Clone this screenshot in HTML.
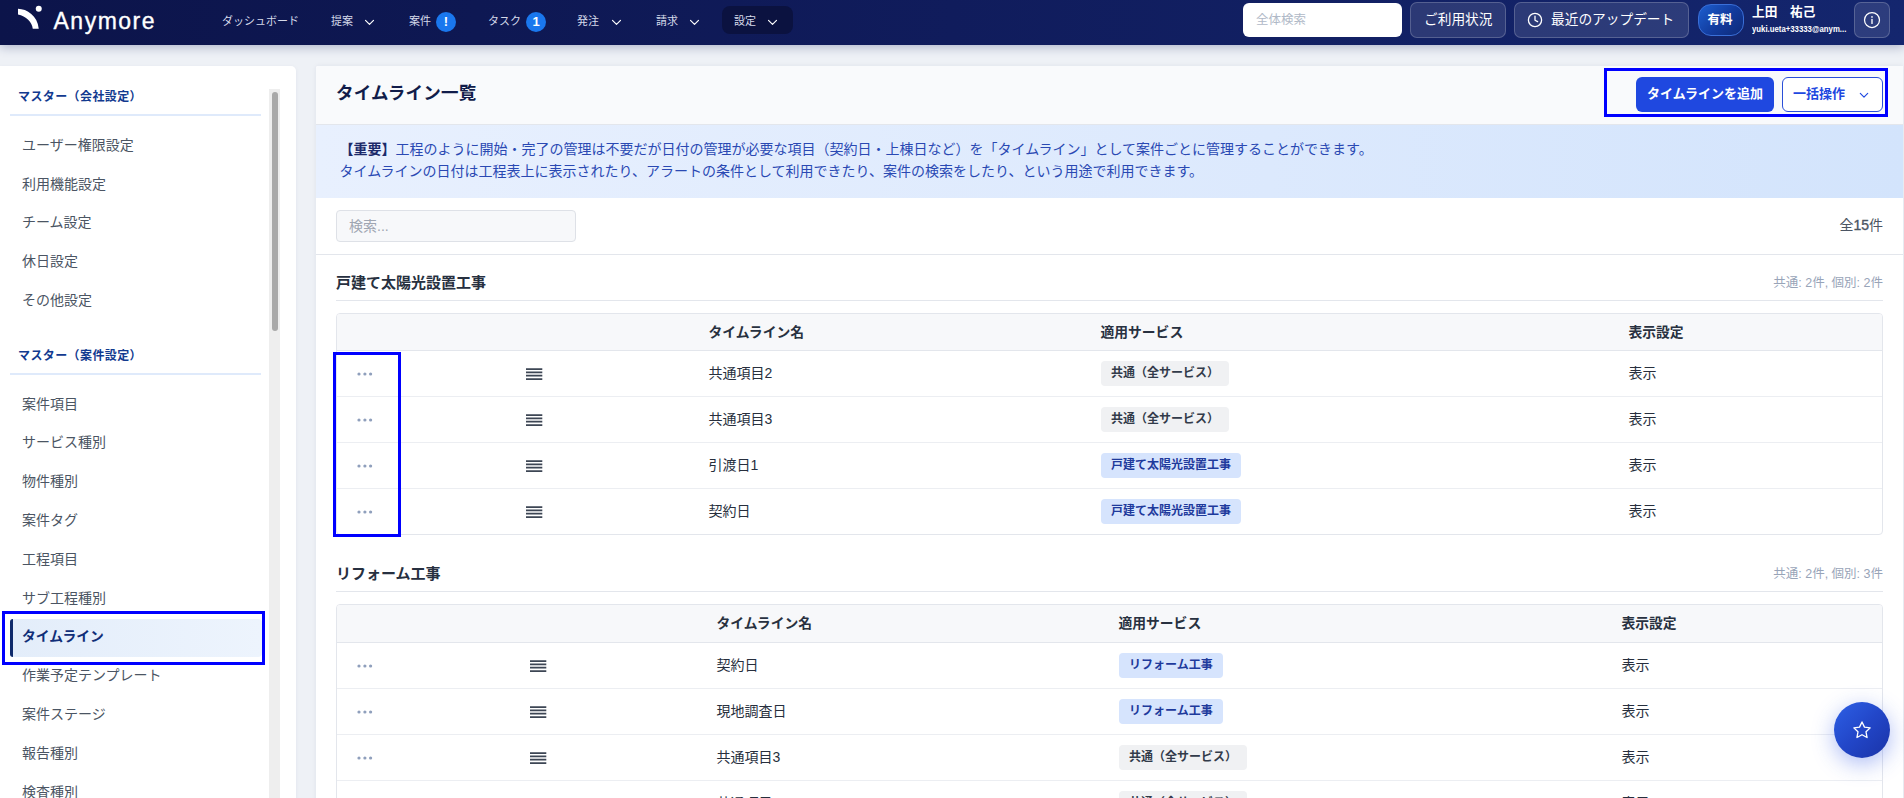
<!DOCTYPE html>
<html lang="ja">
<head>
<meta charset="utf-8">
<title>タイムライン一覧</title>
<style>
*{box-sizing:border-box;margin:0;padding:0}
html,body{width:1904px;height:798px;overflow:hidden}
body{font-family:"Liberation Sans","Noto Sans CJK JP",sans-serif;background:#eef1f6;color:#1f2937;position:relative;font-size:14px}
.abs{position:absolute}
/* ---------- header ---------- */
#hdr{position:absolute;left:0;top:0;width:1904px;height:45px;background:linear-gradient(90deg,#0c144a 0%,#101c5c 50%,#14266e 100%);box-shadow:0 2px 10px rgba(20,36,100,.3);z-index:5}
#hdr .logo{position:absolute;left:16px;top:4px}
#hdr .brand{position:absolute;left:53.5px;top:6px;font-size:23px;line-height:30px;color:#fff;letter-spacing:1.5px;-webkit-text-stroke:.35px #fff;font-family:"Liberation Sans",sans-serif}
.nav{position:absolute;top:0;height:43px;line-height:43px;font-size:11px;color:#d5daea;white-space:nowrap}
.nav svg{position:absolute;top:18.5px}
.badge{position:absolute;top:12px;width:20px;height:20px;border-radius:50%;background:#1a77ee;color:#fff;font-weight:bold;font-size:13px;line-height:20px;text-align:center}
.pill{position:absolute;left:722px;top:6px;width:71px;height:28px;border-radius:8px;background:#0b1240}
.hbtn{position:absolute;top:2px;height:36px;border-radius:7px;background:rgba(255,255,255,.11);border:1px solid rgba(255,255,255,.2);color:#fff;font-size:13.7px;line-height:34px;white-space:nowrap}
#gsearch{position:absolute;left:1243px;top:3px;width:159px;height:34px;border-radius:6px;background:#fff;color:#b0b9c7;font-size:12.5px;line-height:34px;padding-left:13px}
.paid{position:absolute;left:1698px;top:4px;width:46px;height:32px;border-radius:13px;padding-right:2px;background:linear-gradient(135deg,#1d5fd0 0%,#123a9c 55%,#0e2a78 100%);border:1px solid #3a6fd8;color:#fff;font-weight:bold;font-size:12.5px;line-height:30px;text-align:center}
.uname{position:absolute;left:1752px;top:3px;font-size:12.7px;font-weight:bold;color:#fff;line-height:18px;white-space:nowrap}
.umail{position:absolute;left:1752px;top:23px;font-size:9px;font-weight:bold;color:#fff;line-height:12px;white-space:nowrap;transform-origin:left center;transform:scaleX(.865)}
/* ---------- sidebar ---------- */
#side{position:absolute;left:0;top:66px;width:296px;height:740px;background:#fff;border-top-right-radius:5px;box-shadow:0 1px 4px rgba(30,40,90,.06)}
.shead{position:absolute;left:18px;font-size:12px;font-weight:bold;color:#123a8f;line-height:16px;white-space:nowrap;letter-spacing:.4px}
.sline{position:absolute;left:10px;width:251px;height:2px;background:#dfeafb}
.sitem{position:absolute;left:22px;font-size:14px;color:#4b5563;line-height:20px;white-space:nowrap}
.strack{position:absolute;left:269px;top:22px;width:11px;height:720px;background:#eeeeee}
.sthumb{position:absolute;left:272px;top:25px;width:6px;height:239px;border-radius:3px;background:#a9a9a9}
.sact{position:absolute;left:10px;top:552px;width:252px;height:38px;border-radius:4px;background:linear-gradient(90deg,#e3edfa,#edf4fd)}
.sact i{position:absolute;left:0;top:0;width:3px;height:38px;border-radius:3px 0 0 3px;background:#0f2a6b}
.sact b{position:absolute;left:12px;top:7.6px;font-size:13.8px;line-height:20px;color:#102e78}
.hl{position:absolute;border:3px solid #0000ff;z-index:4}
/* ---------- main ---------- */
#main{position:absolute;left:316px;top:66px;width:1587px;height:740px;background:#fff;border-top-left-radius:2px;box-shadow:0 0 5px rgba(30,40,90,.07)}
#mhead{position:absolute;left:0;top:0;width:1587px;height:59px;background:#f9fafc;border-bottom:1px solid #e3e6ec;border-top-left-radius:2px}
#mhead h1{position:absolute;left:20px;top:14.4px;font-size:17.5px;line-height:26px;font-weight:bold;color:#111c4a;letter-spacing:.2px}
.btnp{position:absolute;left:1320px;top:11px;width:138px;height:35px;border-radius:6px;background:#1f48e0;color:#fff;font-weight:bold;font-size:13px;line-height:34px;text-align:center}
.btno{position:absolute;left:1466px;top:11px;width:101px;height:35px;border-radius:6px;background:#fff;border:1px solid #2a4fd8;color:#1f48e0;font-weight:bold;font-size:13px;line-height:32px;padding-left:10px}
#banner{position:absolute;left:0;top:59px;width:1587px;height:73px;background:linear-gradient(90deg,#e8f0fe 0%,#dce9fd 60%,#d3e4fc 100%);color:#2a49b3;font-size:14px;line-height:22px;padding:13px 0 0 23.5px;white-space:nowrap}
#banner b{color:#1c2a6a}
#sbar{position:absolute;left:0;top:131px;width:1587px;height:58px;border-bottom:1px solid #e3e6ec}
#sbar .inp{position:absolute;left:20px;top:13px;width:240px;height:32px;border-radius:4px;border:1px solid #dee1e7;background:#f7f8fa;color:#9fa6b2;font-size:14px;line-height:30px;padding-left:12px}
#sbar .cnt{position:absolute;right:20px;top:18px;font-size:14px;line-height:20px;color:#4b5563}
.sec{position:absolute;left:20px;width:1547px}
.sec h2{position:absolute;left:0;top:0;font-size:15px;line-height:22px;font-weight:bold;color:#273040}
.sec .meta{position:absolute;right:0;top:2px;font-size:12.5px;line-height:18px;color:#98a4b8}
.sec .ul{position:absolute;left:0;top:28px;width:1547px;height:1px;background:#e3e6ec}
.tbl{position:absolute;left:0;top:41px;width:1547px;border:1px solid #e3e6ec;border-radius:4px;background:#fff;overflow:hidden}
.th{position:relative;height:37px;background:#f7f8fa;border-bottom:1px solid #e3e6ec;font-weight:bold;font-size:14px;color:#283140}
.th2{height:38px}
.th2 span{line-height:38px}
.tr{position:relative;height:46px;border-bottom:1px solid #eceef2;font-size:14px;color:#272f3d}
.tr:last-child{border-bottom:none;height:45px}
.th span,.tr span{position:absolute;top:0;white-space:nowrap;margin-left:-.6px}
.th span{line-height:37px;font-size:13.8px}
.tr span{line-height:45px}
.dots{position:absolute;left:20px;top:20px;fill:#8f9fbc}
.ham{position:absolute;top:17px}
.tag{position:absolute;top:10px;height:25px;border-radius:4px;font-size:12px;font-weight:bold;line-height:25px;padding:0 10px;white-space:nowrap}
.tg{background:#f0f1f3;color:#323b4a}
.tb{background:#d6e4fd;color:#1e3a9c}
#fab{position:absolute;left:1834px;top:702px;width:56px;height:56px;border-radius:50%;background:linear-gradient(135deg,#2d60e6 0%,#2246c8 50%,#1a33a6 100%);box-shadow:0 6px 22px rgba(40,80,230,.38);z-index:6}
</style>
</head>
<body>
<!-- HEADER -->
<div id="hdr">
  <svg class="logo" width="32" height="30" viewBox="0 0 32 30"><path d="M2 4.75 C 11 5, 21.5 11.5, 22.75 24.75 L 16.75 24.75 C 16.2 18, 10 12, 2 10.4 Z" fill="#fff"/><circle cx="22.75" cy="4.75" r="3" fill="#fff"/></svg>
  <div class="brand">Anymore</div>
  <div class="nav" style="left:222px">ダッシュボード</div>
  <div class="nav" style="left:331px">提案<svg style="left:33px" width="11" height="7" viewBox="0 0 11 7"><path d="M1.5 1.3 L5.5 5.3 L9.5 1.3" fill="none" stroke="#fff" stroke-width="1.15" stroke-linecap="round" stroke-linejoin="round"/></svg></div>
  <div class="nav" style="left:409px">案件</div><div class="badge" style="left:436px">!</div>
  <div class="nav" style="left:488px">タスク</div><div class="badge" style="left:526px">1</div>
  <div class="nav" style="left:577px">発注<svg style="left:33.5px" width="11" height="7" viewBox="0 0 11 7"><path d="M1.5 1.3 L5.5 5.3 L9.5 1.3" fill="none" stroke="#fff" stroke-width="1.15" stroke-linecap="round" stroke-linejoin="round"/></svg></div>
  <div class="nav" style="left:656px">請求<svg style="left:32.5px" width="11" height="7" viewBox="0 0 11 7"><path d="M1.5 1.3 L5.5 5.3 L9.5 1.3" fill="none" stroke="#fff" stroke-width="1.15" stroke-linecap="round" stroke-linejoin="round"/></svg></div>
  <div class="pill"></div>
  <div class="nav" style="left:734px">設定<svg style="left:33px" width="11" height="7" viewBox="0 0 11 7"><path d="M1.5 1.3 L5.5 5.3 L9.5 1.3" fill="none" stroke="#fff" stroke-width="1.15" stroke-linecap="round" stroke-linejoin="round"/></svg></div>
  <div id="gsearch">全体検索</div>
  <div class="hbtn" style="left:1410px;width:96px;padding-left:13px">ご利用状況</div>
  <div class="hbtn" style="left:1514px;width:175px;padding-left:36px"><svg class="abs" style="left:12px;top:9px" width="16" height="16" viewBox="0 0 16 16"><circle cx="8" cy="8" r="6.6" fill="none" stroke="#fff" stroke-width="1.3"/><path d="M8 4.2 V8.2 L10.6 9.6" fill="none" stroke="#fff" stroke-width="1.3" stroke-linecap="round" stroke-linejoin="round"/></svg>最近のアップデート</div>
  <div class="paid">有料</div>
  <div class="uname">上田　祐己</div>
  <div class="umail">yuki.ueta+33333@anym...</div>
  <div class="hbtn" style="left:1854px;width:36px"><svg class="abs" style="left:8px;top:8px" width="18" height="18" viewBox="0 0 18 18"><circle cx="9" cy="9" r="7.5" fill="none" stroke="#fff" stroke-width="1.25"/><circle cx="9" cy="5.9" r=".85" fill="#fff"/><path d="M9 8.4 V12.4" stroke="#fff" stroke-width="1.35" stroke-linecap="round"/></svg></div>
</div>

<!-- SIDEBAR -->
<div id="side"><div style="position:absolute;left:0;top:1px">
  <div class="strack"></div><div class="sthumb"></div>
  <div class="shead" style="top:22px">マスター（会社設定）</div>
  <div class="sline" style="top:47px"></div>
  <div class="sitem" style="top:68px">ユーザー権限設定</div>
  <div class="sitem" style="top:107px">利用機能設定</div>
  <div class="sitem" style="top:145px">チーム設定</div>
  <div class="sitem" style="top:184px">休日設定</div>
  <div class="sitem" style="top:223px">その他設定</div>
  <div class="shead" style="top:281px">マスター（案件設定）</div>
  <div class="sline" style="top:306px"></div>
  <div class="sitem" style="top:327px">案件項目</div>
  <div class="sitem" style="top:365px">サービス種別</div>
  <div class="sitem" style="top:404px">物件種別</div>
  <div class="sitem" style="top:443px">案件タグ</div>
  <div class="sitem" style="top:482px">工程項目</div>
  <div class="sitem" style="top:521px">サブ工程種別</div>
  <div class="sact"><i></i><b>タイムライン</b></div>
  <div class="sitem" style="top:598px">作業予定テンプレート</div>
  <div class="sitem" style="top:637px">案件ステージ</div>
  <div class="sitem" style="top:676px">報告種別</div>
  <div class="sitem" style="top:715px">検査種別</div>
</div></div>
<div class="hl" style="left:2px;top:611px;width:263px;height:54px"></div>

<!-- MAIN -->
<div id="main">
  <div id="mhead">
    <h1>タイムライン一覧</h1>
    <div class="btnp">タイムラインを追加</div>
    <div class="btno">一括操作<svg class="abs" style="left:76px;top:13.5px" width="10" height="7" viewBox="0 0 10 7"><path d="M1.3 1.4 L5 5.1 L8.7 1.4" fill="none" stroke="#1f48e0" stroke-width="1.15" stroke-linecap="round" stroke-linejoin="round"/></svg></div>
  </div>
  <div id="banner"><b>【重要】</b>工程のように開始・完了の管理は不要だが日付の管理が必要な項目（契約日・上棟日など）を「タイムライン」として案件ごとに管理することができます。<br>タイムラインの日付は工程表上に表示されたり、アラートの条件として利用できたり、案件の検索をしたり、という用途で利用できます。</div>
  <div id="sbar"><div class="inp">検索...</div><div class="cnt">全<b style="font-weight:normal;-webkit-text-stroke:.35px #4b5563">15</b>件</div></div>

  <!-- section 1 -->
  <div class="sec" style="top:206px">
    <h2>戸建て太陽光設置工事</h2><div class="meta">共通: 2件, 個別: 2件</div><div class="ul"></div>
    <div class="tbl">
      <div class="th"><span style="left:372px">タイムライン名</span><span style="left:764px">適用サービス</span><span style="left:1292px">表示設定</span></div>
      <div class="tr"><svg class="dots" width="17" height="6" viewBox="0 0 17 6"><circle cx="2" cy="3" r="1.6"/><circle cx="7.9" cy="3" r="1.6"/><circle cx="13.6" cy="3" r="1.6"/></svg><svg class="ham" style="left:189px" width="17" height="13" viewBox="0 0 17 13"><path d="M0 1H16.3M0 4.35H16.3M0 7.7H16.3M0 11.05H16.3" stroke="#3d4654" stroke-width="1.75" fill="none"/></svg><span style="left:372px">共通項目2</span><div class="tag tg" style="left:764px">共通（全サービス）</div><span style="left:1292px">表示</span></div>
      <div class="tr"><svg class="dots" width="17" height="6" viewBox="0 0 17 6"><circle cx="2" cy="3" r="1.6"/><circle cx="7.9" cy="3" r="1.6"/><circle cx="13.6" cy="3" r="1.6"/></svg><svg class="ham" style="left:189px" width="17" height="13" viewBox="0 0 17 13"><path d="M0 1H16.3M0 4.35H16.3M0 7.7H16.3M0 11.05H16.3" stroke="#3d4654" stroke-width="1.75" fill="none"/></svg><span style="left:372px">共通項目3</span><div class="tag tg" style="left:764px">共通（全サービス）</div><span style="left:1292px">表示</span></div>
      <div class="tr"><svg class="dots" width="17" height="6" viewBox="0 0 17 6"><circle cx="2" cy="3" r="1.6"/><circle cx="7.9" cy="3" r="1.6"/><circle cx="13.6" cy="3" r="1.6"/></svg><svg class="ham" style="left:189px" width="17" height="13" viewBox="0 0 17 13"><path d="M0 1H16.3M0 4.35H16.3M0 7.7H16.3M0 11.05H16.3" stroke="#3d4654" stroke-width="1.75" fill="none"/></svg><span style="left:372px">引渡日1</span><div class="tag tb" style="left:764px">戸建て太陽光設置工事</div><span style="left:1292px">表示</span></div>
      <div class="tr"><svg class="dots" width="17" height="6" viewBox="0 0 17 6"><circle cx="2" cy="3" r="1.6"/><circle cx="7.9" cy="3" r="1.6"/><circle cx="13.6" cy="3" r="1.6"/></svg><svg class="ham" style="left:189px" width="17" height="13" viewBox="0 0 17 13"><path d="M0 1H16.3M0 4.35H16.3M0 7.7H16.3M0 11.05H16.3" stroke="#3d4654" stroke-width="1.75" fill="none"/></svg><span style="left:372px">契約日</span><div class="tag tb" style="left:764px">戸建て太陽光設置工事</div><span style="left:1292px">表示</span></div>
    </div>
  </div>

  <!-- section 2 -->
  <div class="sec" style="top:497px">
    <h2>リフォーム工事</h2><div class="meta">共通: 2件, 個別: 3件</div><div class="ul"></div>
    <div class="tbl">
      <div class="th th2"><span style="left:380px">タイムライン名</span><span style="left:782px">適用サービス</span><span style="left:1285px">表示設定</span></div>
      <div class="tr"><svg class="dots" width="17" height="6" viewBox="0 0 17 6"><circle cx="2" cy="3" r="1.6"/><circle cx="7.9" cy="3" r="1.6"/><circle cx="13.6" cy="3" r="1.6"/></svg><svg class="ham" style="left:193px" width="17" height="13" viewBox="0 0 17 13"><path d="M0 1H16.3M0 4.35H16.3M0 7.7H16.3M0 11.05H16.3" stroke="#3d4654" stroke-width="1.75" fill="none"/></svg><span style="left:380px">契約日</span><div class="tag tb" style="left:782px">リフォーム工事</div><span style="left:1285px">表示</span></div>
      <div class="tr"><svg class="dots" width="17" height="6" viewBox="0 0 17 6"><circle cx="2" cy="3" r="1.6"/><circle cx="7.9" cy="3" r="1.6"/><circle cx="13.6" cy="3" r="1.6"/></svg><svg class="ham" style="left:193px" width="17" height="13" viewBox="0 0 17 13"><path d="M0 1H16.3M0 4.35H16.3M0 7.7H16.3M0 11.05H16.3" stroke="#3d4654" stroke-width="1.75" fill="none"/></svg><span style="left:380px">現地調査日</span><div class="tag tb" style="left:782px">リフォーム工事</div><span style="left:1285px">表示</span></div>
      <div class="tr"><svg class="dots" width="17" height="6" viewBox="0 0 17 6"><circle cx="2" cy="3" r="1.6"/><circle cx="7.9" cy="3" r="1.6"/><circle cx="13.6" cy="3" r="1.6"/></svg><svg class="ham" style="left:193px" width="17" height="13" viewBox="0 0 17 13"><path d="M0 1H16.3M0 4.35H16.3M0 7.7H16.3M0 11.05H16.3" stroke="#3d4654" stroke-width="1.75" fill="none"/></svg><span style="left:380px">共通項目3</span><div class="tag tg" style="left:782px">共通（全サービス）</div><span style="left:1285px">表示</span></div>
      <div class="tr"><svg class="dots" width="17" height="6" viewBox="0 0 17 6"><circle cx="2" cy="3" r="1.6"/><circle cx="7.9" cy="3" r="1.6"/><circle cx="13.6" cy="3" r="1.6"/></svg><svg class="ham" style="left:193px" width="17" height="13" viewBox="0 0 17 13"><path d="M0 1H16.3M0 4.35H16.3M0 7.7H16.3M0 11.05H16.3" stroke="#3d4654" stroke-width="1.75" fill="none"/></svg><span style="left:380px">共通項目2</span><div class="tag tg" style="left:782px">共通（全サービス）</div><span style="left:1285px">表示</span></div>
    </div>
  </div>
</div>
<div class="hl" style="left:1604px;top:68px;width:284px;height:49px"></div>
<div class="hl" style="left:333px;top:352px;width:68px;height:185px"></div>

<div id="fab"><svg class="abs" style="left:17px;top:17px" width="22" height="22" viewBox="0 0 24 24"><path d="M12 3.2 L14.7 8.9 L20.9 9.7 L16.4 14 L17.5 20.2 L12 17.2 L6.5 20.2 L7.6 14 L3.1 9.7 L9.3 8.9 Z" fill="none" stroke="#fff" stroke-width="1.45" stroke-linejoin="round"/></svg></div>
</body>
</html>
